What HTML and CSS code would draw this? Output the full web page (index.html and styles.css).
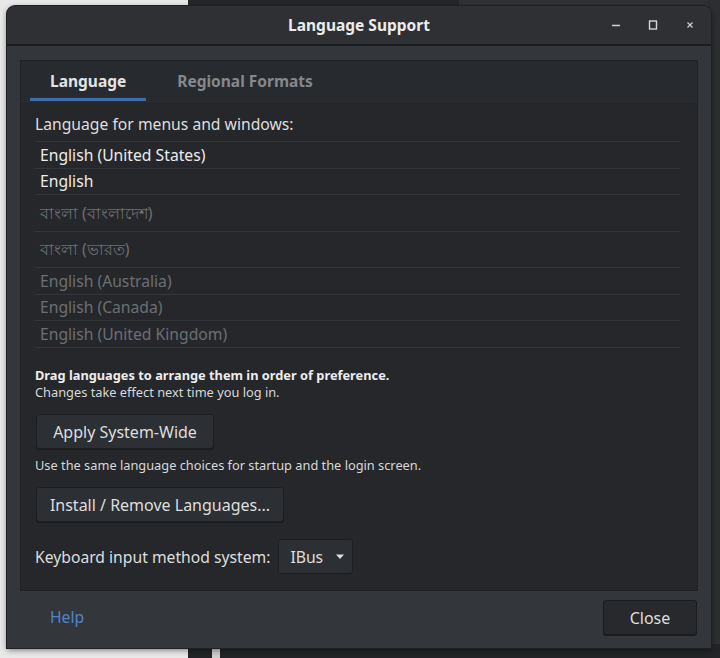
FILE: index.html
```html
<!DOCTYPE html>
<html lang="en">
<head>
  <meta charset="UTF-8" />
  <meta name="viewport" content="width=device-width, initial-scale=1.0" />
  <title>Language Support</title>
  <link rel="stylesheet" href="styles.css">
</head>
<body>
  <div class="desktop">
    <div class="bg-top-dark"></div>
    <div class="bg-top-grey"></div>
    <div class="bg-right"></div>
    <div class="bg-bottom-dark"><span class="bg-icon"></span></div>

    <div class="window">
      <header class="titlebar">
        <div></div>
        <h1>Language Support</h1>
        <div class="controls">
          <span class="ctl">
            <svg width="10" height="10" viewBox="0 0 10 10"><path d="M1 5.5h8" stroke="#cfcfcf" stroke-width="1.4"/></svg>
          </span>
          <span class="ctl">
            <svg width="10" height="10" viewBox="0 0 10 10"><rect x="1.5" y="1" width="7" height="8" fill="none" stroke="#d6d6d6" stroke-width="1.4"/></svg>
          </span>
          <span class="ctl">
            <svg width="10" height="10" viewBox="0 0 10 10"><path d="M2.5 2.5l5 5M7.5 2.5l-5 5" stroke="#cfcfcf" stroke-width="1.2"/></svg>
          </span>
        </div>
      </header>

      <div class="win-body">
        <div class="notebook">
          <div class="tabs">
            <div class="tab active">Language</div>
            <div class="tab">Regional Formats</div>
          </div>
          <div class="page">
            <p class="label">Language for menus and windows:</p>
            <ul class="langs">
              <li class="on">English (United States)</li>
              <li class="on short">English</li>
              <li class="tall">বাংলা (বাংলাদেশ)</li>
              <li class="tall short">বাংলা (ভারত)</li>
              <li>English (Australia)</li>
              <li class="short">English (Canada)</li>
              <li>English (United Kingdom)</li>
            </ul>
            <p class="hint"><b>Drag languages to arrange them in order of preference.</b><br>Changes take effect next time you log in.</p>
            <button class="btn btn-apply">Apply System-Wide</button>
            <p class="hint small-gap">Use the same language choices for startup and the login screen.</p>
            <button class="btn btn-install">Install / Remove Languages...</button>
            <div class="kb-row">
              <span class="kb-label">Keyboard input method system:</span>
              <span class="combo">IBus
                <svg width="10" height="6" viewBox="0 0 10 6"><path d="M1 0.5h8L5 5z" fill="#e0e0e0"/></svg>
              </span>
            </div>
          </div>
        </div>

        <div class="actions">
          <a class="help">Help</a>
          <button class="btn btn-close">Close</button>
        </div>
      </div>
    </div>
  </div>
</body>
</html>
```

FILE: styles.css
```css
:root {
  --desk-light: #e9e9e9;
  --title-bg: #2e3034;
  --title-line: #1b1c1f;
  --win-bg: #33363a;
  --page-bg: #25272b;
  --row-line: #33363a;
  --btn-bg: #2c2f33;
  --btn-border: #1c1e21;
  --text: #dedede;
  --text-dim: #6c6f73;
  --tab-dim: #85888c;
  --accent: #3e6fa6;
  --link: #4f86c6;
}
* { box-sizing: border-box; margin: 0; padding: 0; }
body {
  font-family: "Noto Sans", "DejaVu Sans", sans-serif;
  background: var(--desk-light);
  color: var(--text);
}
.desktop { position: relative; width: 720px; height: 658px; overflow: hidden; }

/* other windows behind the dialog */
.bg-top-dark { position: absolute; left: 188px; top: 0; width: 271px; height: 10px; background: #24262a; }
.bg-top-grey { position: absolute; left: 459px; top: 0; width: 261px; height: 10px; background: #2f3134; }
.bg-right { position: absolute; right: 0; top: 0; width: 12px; height: 658px; background: #2c2e31; }
.bg-bottom-dark { position: absolute; left: 188px; bottom: 0; width: 532px; height: 14px; background: #222427; }
.bg-icon { position: absolute; left: 24px; top: 5px; width: 8px; height: 9px; background: #cfcfcf; }

.window {
  position: absolute; left: 7px; top: 6px; width: 704px; height: 642px;
  background: var(--win-bg);
  border-radius: 8px 8px 0 0;
  box-shadow: 0 0 0 1px #1f2023, 0 2px 6px rgba(0,0,0,.5);
  display: flex; flex-direction: column; overflow: hidden;
}

.titlebar {
  height: 40px; flex: none;
  background: var(--title-bg);
  border-bottom: 2px solid var(--title-line);
  display: grid; grid-template-columns: 1fr auto 1fr; align-items: center;
}
.titlebar h1 { font-size: 15.5px; font-weight: bold; color: #ececec; }
.controls { display: flex; justify-content: flex-end; gap: 7px; padding-right: 6px; }
.ctl { width: 30px; height: 26px; display: flex; align-items: center; justify-content: center; }

.win-body { flex: 1; display: flex; flex-direction: column; padding: 14px 13px 0 13px; }

.notebook {
  height: 531px; flex: none;
  background: var(--page-bg);
  border: 1px solid #1f2124;
  display: flex; flex-direction: column;
}
.tabs { display: flex; gap: 11px; padding-left: 9px; height: 41px; flex: none; border-bottom: 1px solid #2b2e32; background: #272a2e; }
.tab { padding: 3px 20px 0; display: flex; align-items: center; font-size: 15.5px; font-weight: bold; color: var(--tab-dim); border-bottom: 3px solid transparent; }
.tab.active { color: #e4e4e4; border-bottom-color: var(--accent); }

.page { flex: 1; padding: 12px 17px 0 14px; }
.label { font-size: 15.7px; line-height: 20px; }
.langs { list-style: none; margin-top: 7px; border-top: 1px solid var(--row-line); }
.langs li {
  height: 27px; line-height: 26px; padding-left: 5px;
  border-bottom: 1px solid var(--row-line);
  font-size: 15.7px; color: var(--text-dim);
}
.langs li.short { height: 26px; line-height: 25px; }
.langs li.on { color: #ececec; }
.langs li.tall { height: 37px; line-height: 36px; }
.langs li.tall.short { height: 36px; line-height: 35px; }

.hint { font-size: 12.8px; line-height: 17px; margin-top: 19px; color: #d8d8d8; }
.hint b { color: #ededed; }
.hint.small-gap { margin-top: 8px; }

.btn {
  display: block; height: 35px; padding: 0;
  font-family: inherit; font-size: 16px; color: var(--text);
  background: var(--btn-bg);
  border: 1px solid var(--btn-border);
  border-radius: 3px;
  box-shadow: 0 1px 0 #1a1b1e;
}
.btn-apply { margin-top: 13px; margin-left: 1px; width: 178px; }
.btn-install { margin-top: 13px; margin-left: 1px; width: 248px; }

.kb-row { display: flex; align-items: center; gap: 8px; margin-top: 17px; }
.kb-label { font-size: 15.7px; }
.combo {
  height: 35px; width: 75px; display: flex; align-items: center; gap: 12px; padding-left: 11px;
  background: var(--btn-bg); border: 1px solid var(--btn-border); border-radius: 3px;
  font-size: 15.7px;
}

.actions { height: 57px; flex: none; display: flex; align-items: flex-start; justify-content: space-between; padding: 9px 1px 0 30px; }
.help { color: var(--link); font-size: 15.7px; line-height: 35px; }
.btn-close { width: 94px; background: #27292d; border-color: #1a1c1f; }
```
